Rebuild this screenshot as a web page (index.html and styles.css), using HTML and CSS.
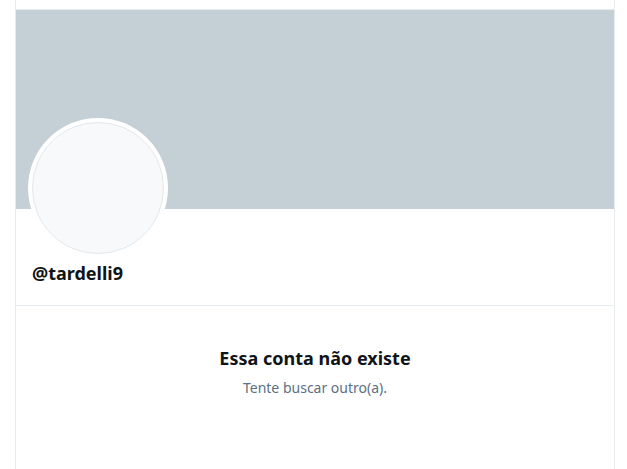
FILE: index.html
```html
<!DOCTYPE html>
<html lang="pt">
<head>
<meta charset="utf-8">
<link rel="stylesheet" href="styles.css">
</head>
<body>
<main class="column">
  <div class="topbar"></div>
  <div class="banner"></div>
  <section class="profile">
    <div class="avatar"><div class="avatar-inner"></div></div>
    <div class="handle">@tardelli9</div>
  </section>
  <section class="empty">
    <div class="empty-title">Essa conta não existe</div>
    <div class="empty-sub">Tente buscar outro(a).</div>
  </section>
</main>
</body>
</html>
```
FILE: styles.css
```css
html, body {
  margin: 0;
  padding: 0;
  background: #fff;
  height: 100%;
}
body {
  font-family: "Noto Sans", "Open Sans", sans-serif;
  color: #0f1419;
}
.column {
  margin-left: 15px;
  width: 598px;
  min-height: 100%;
  border-left: 1px solid #e6ecf0;
  border-right: 1px solid #e6ecf0;
  box-sizing: content-box;
}
.topbar {
  height: 9px;
  border-bottom: 1px solid #e6ecf0;
}
.banner {
  height: 199px;
  background: #c4cfd6;
}
.profile {
  padding: 0 12px;
  border-bottom: 1px solid #e6ecf0;
  padding-bottom: 19px;
}
.avatar {
  width: 140px;
  height: 140px;
  margin-top: -91px;
  border-radius: 50%;
  background: #fff;
  display: flex;
  align-items: center;
  justify-content: center;
}
.avatar-inner {
  width: 130px;
  height: 130px;
  border-radius: 50%;
  background: #f7f9fa;
  border: 1px solid #e1e8ed;
}
.handle {
  margin-top: 3px;
  padding-left: 4px;
  font-size: 18px;
  font-weight: 700;
  line-height: 25px;
  color: #0f1419;
}
.empty {
  padding-top: 40px;
  text-align: center;
}
.empty-title {
  font-size: 18px;
  font-weight: 700;
  line-height: 24px;
  color: #0f1419;
}
.empty-sub {
  margin-top: 8px;
  font-size: 14px;
  line-height: 20px;
  color: #5b7083;
}
```
